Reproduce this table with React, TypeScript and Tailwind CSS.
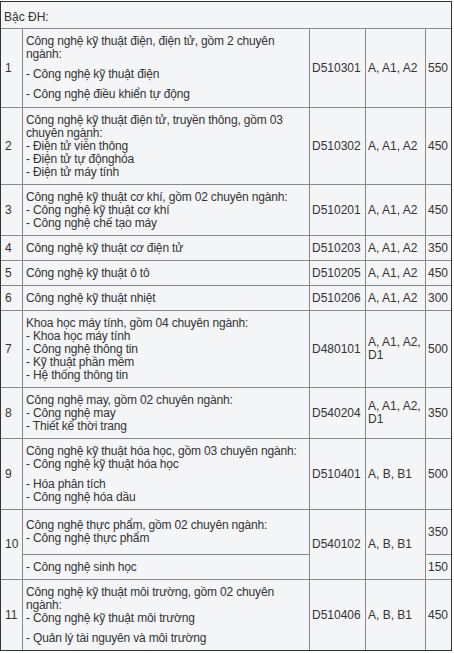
type Row = {
  no: string
  text: string[][]
  code: string
  group: string[]
  quota: string
}

const rows: Row[] = [
  {
    no: '1',
    text: [
      ['Công nghệ kỹ thuật điện, điện tử, gồm 2 chuyên', 'ngành:'],
      ['- Công nghệ kỹ thuật điện'],
      ['- Công nghệ điều khiển tự động'],
    ],
    code: 'D510301',
    group: ['A, A1, A2'],
    quota: '550',
  },
  {
    no: '2',
    text: [
      [
        'Công nghệ kỹ thuật điện tử, truyền thông, gồm 03',
        'chuyên ngành:',
        '- Điện tử viễn thông',
        '- Điện tử tự độnghóa',
        '- Điện tử máy tính',
      ],
    ],
    code: 'D510302',
    group: ['A, A1, A2'],
    quota: '450',
  },
  {
    no: '3',
    text: [['Công nghệ kỹ thuật cơ khí, gồm 02 chuyên ngành:', '- Công nghệ kỹ thuật cơ khí', '- Công nghệ chế tạo máy']],
    code: 'D510201',
    group: ['A, A1, A2'],
    quota: '450',
  },
  { no: '4', text: [['Công nghệ kỹ thuật cơ điện tử']], code: 'D510203', group: ['A, A1, A2'], quota: '350' },
  { no: '5', text: [['Công nghệ kỹ thuật ô tô']], code: 'D510205', group: ['A, A1, A2'], quota: '450' },
  { no: '6', text: [['Công nghệ kỹ thuật nhiệt']], code: 'D510206', group: ['A, A1, A2'], quota: '300' },
  {
    no: '7',
    text: [
      [
        'Khoa học máy tính, gồm 04 chuyên ngành:',
        '- Khoa học máy tính',
        '- Công nghệ thông tin',
        '- Kỹ thuật phần mềm',
        '- Hệ thống thông tin',
      ],
    ],
    code: 'D480101',
    group: ['A, A1, A2,', 'D1'],
    quota: '500',
  },
  {
    no: '8',
    text: [['Công nghệ may, gồm 02 chuyên ngành:', '- Công nghệ may', '- Thiết kế thời trang']],
    code: 'D540204',
    group: ['A, A1, A2,', 'D1'],
    quota: '350',
  },
  {
    no: '9',
    text: [
      ['Công nghệ kỹ thuật hóa học, gồm 03 chuyên ngành:', '- Công nghệ kỹ thuật hóa học'],
      ['- Hóa phân tích', '- Công nghệ hóa dầu'],
    ],
    code: 'D510401',
    group: ['A, B, B1'],
    quota: '500',
  },
]

const lastRow: Row = {
  no: '11',
  text: [
    ['Công nghệ kỹ thuật môi trường, gồm 02 chuyên', 'ngành:', '- Công nghệ kỹ thuật môi trường'],
    ['- Quản lý tài nguyên và môi trường'],
  ],
  code: 'D510406',
  group: ['A, B, B1'],
  quota: '450',
}

function Lines({ paras }: { paras: string[][] }) {
  return (
    <div className="flex flex-col gap-[7px]">
      {paras.map((p, i) => (
        <div key={i}>
          {p.map((l, j) => (
            <div key={j} className="whitespace-nowrap leading-[13px]">
              {l}
            </div>
          ))}
        </div>
      ))}
    </div>
  )
}

function TableRow({ row, last }: { row: Row; last?: boolean }) {
  const b = last ? '' : 'border-b'
  return (
    <>
      <div className={`flex items-center pl-[4px] border-r ${b} border-[#8a8a8a] leading-[13px]`}>{row.no}</div>
      <div className={`flex items-center pl-[3px] border-r ${b} border-[#8a8a8a] tracking-[-0.17px]`}>
        <Lines paras={row.text} />
      </div>
      <div className={`flex items-center pl-[2px] border-r ${b} border-[#8a8a8a] leading-[13px]`}>{row.code}</div>
      <div className={`flex items-center pl-[2px] border-r ${b} border-[#8a8a8a]`}>
        <Lines paras={[row.group]} />
      </div>
      <div className={`flex items-center pl-[2px] ${b} border-[#8a8a8a] leading-[13px]`}>{row.quota}</div>
    </>
  )
}

export default function App() {
  return (
    <div className="min-h-screen bg-white pt-px">
      <div
        className="w-[452px] border border-[#333333] bg-[#f4f5f7] text-[12px] text-[#333333] grid grid-cols-[22px_287px_56px_60px_25px] grid-rows-[27px_79px_77px_51px_25px_25px_25px_77px_51px_71px_45px_25px_70px]"
        style={{ fontFamily: '"Liberation Sans", Arial, sans-serif' }}
      >
        <div className="col-span-5 border-b border-[#8a8a8a] pl-[3px] pt-[9px] leading-[13px]">Bậc ĐH:</div>

        {rows.map((r) => (
          <TableRow key={r.no} row={r} />
        ))}

        {/* row 10 has two sub-rows */}
        <div className="row-span-2 flex items-center pl-[4px] border-r border-b border-[#8a8a8a] leading-[13px]">10</div>
        <div className="flex items-center pl-[3px] border-r border-b border-[#8a8a8a] tracking-[-0.17px]">
          <Lines paras={[['Công nghệ thực phẩm, gồm 02 chuyên ngành:', '- Công nghệ thực phẩm']]} />
        </div>
        <div className="row-span-2 flex items-center pl-[2px] border-r border-b border-[#8a8a8a] leading-[13px]">
          D540102
        </div>
        <div className="row-span-2 flex items-center pl-[2px] border-r border-b border-[#8a8a8a] leading-[13px]">
          A, B, B1
        </div>
        <div className="flex items-center pl-[2px] border-b border-[#8a8a8a] leading-[13px]">350</div>
        <div className="flex items-center pl-[3px] border-r border-b border-[#8a8a8a] leading-[13px] tracking-[-0.17px]">
          - Công nghệ sinh học
        </div>
        <div className="flex items-center pl-[2px] border-b border-[#8a8a8a] leading-[13px]">150</div>

        <TableRow row={lastRow} last />
      </div>
    </div>
  )
}
